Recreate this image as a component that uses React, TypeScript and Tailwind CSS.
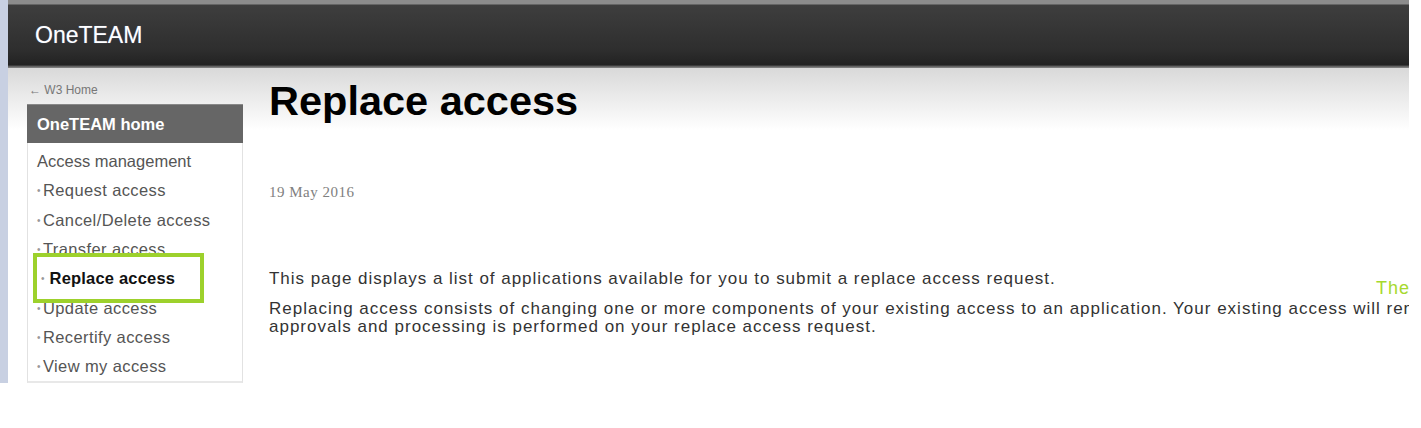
import React from "react";

const items = [
  "Request access",
  "Cancel/Delete access",
  "Transfer access",
  "Replace access",
  "Update access",
  "Recertify access",
  "View my access",
];

export default function App() {
  return (
    <div
      className="relative w-[1421px] h-[428px] bg-white overflow-hidden"
      style={{ fontFamily: '"Liberation Sans", Arial, sans-serif' }}
    >
      <div className="flex h-[383px]">
        <div className="w-[8px] h-full bg-[#c8d0e2]" />
        <div className="w-[1401px] h-full flex flex-col overflow-hidden">
          <header className="h-[68px] shrink-0 flex items-center pl-[27px] bg-[linear-gradient(to_bottom,#8c8c8c_0px,#8c8c8c_4px,#3e3e3e_5px,#2e2e2e_50px,#222222_65px,#555555_66px,#8a8a8a_68px)]">
            <span className="text-[23px] text-white leading-none mt-[2px] [text-shadow:0_0_1px_rgba(160,190,255,0.6)]">
              OneTEAM
            </span>
          </header>
          <div className="relative flex-1 flex pl-[19px] bg-[linear-gradient(to_bottom,#d9d9d9,#ffffff_62px)]">
            {/* sidebar */}
            <aside className="w-[216px] shrink-0 flex flex-col pt-[14px]">
              <div className="h-[16px] leading-[16px] text-[12px] text-[#777] pl-[2px]">
                ← W3 Home
              </div>
              <div className="mt-[6px] h-[39px] bg-[#666666] flex items-center pl-[10px] text-[16.5px] font-bold text-white border-t border-[#888]">
                OneTEAM home
              </div>
              <div className="flex-1 bg-white border-x border-[#e2e2e2] border-b-[3px] border-b-[#e8e8e8] pt-[4px] flex flex-col">
                <div className="h-[29.3px] leading-[29px] pl-[9px] text-[16.5px] text-[#555]">
                  Access management
                </div>
                {items.map((t) => (
                  <div
                    key={t}
                    className="h-[29.3px] leading-[29px] pl-[9px] text-[16.5px] text-[#555] flex items-center gap-[2px] tracking-[0.4px]"
                  >
                    <span className="text-[10px] text-[#999]">•</span>
                    <span>{t}</span>
                  </div>
                ))}
              </div>
            </aside>

            {/* highlight overlay */}
            <div className="absolute left-[25px] top-[185px] w-[171px] h-[50px] border-[4px] border-[#9dd12c] bg-white flex items-center pl-[4px] gap-[5px]">
              <span className="text-[10px] text-[#999]">•</span>
              <span className="text-[16.5px] font-bold text-[#111] tracking-[0.2px]">Replace access</span>
            </div>

            {/* main */}
            <main className="ml-[26px] flex-1 min-w-0 pt-[9px]">
              <h1 className="text-[41.5px] leading-[48px] font-bold text-black">
                Replace access
              </h1>
              <div
                className="mt-[57px] h-[20px] leading-[20px] text-[15px] text-[#808080] tracking-[0.5px]"
                style={{ fontFamily: '"Liberation Serif", Georgia, serif' }}
              >
                19 May 2016
              </div>
              <div className="mt-[67px] h-[20px] flex items-start justify-between">
                <p className="h-[20px] leading-[20px] text-[17px] text-[#333] whitespace-nowrap tracking-[0.97px]">
                  This page displays a list of applications available for you to submit a replace access request.
                </p>
                <span className="mt-[9px] text-[18px] leading-[20px] text-[#a6d92e] whitespace-nowrap tracking-[1px] -mr-[19px]">
                  There
                </span>
              </div>
              <div className="mt-[11px] text-[17px] leading-[18px] text-[#333] whitespace-nowrap tracking-[1px]">
                <div>
                  Replacing access consists of changing one or more components of your existing access to an application. Your existing access will remain active until all
                </div>
                <div>approvals and processing is performed on your replace access request.</div>
              </div>
            </main>
          </div>
        </div>
      </div>
    </div>
  );
}
